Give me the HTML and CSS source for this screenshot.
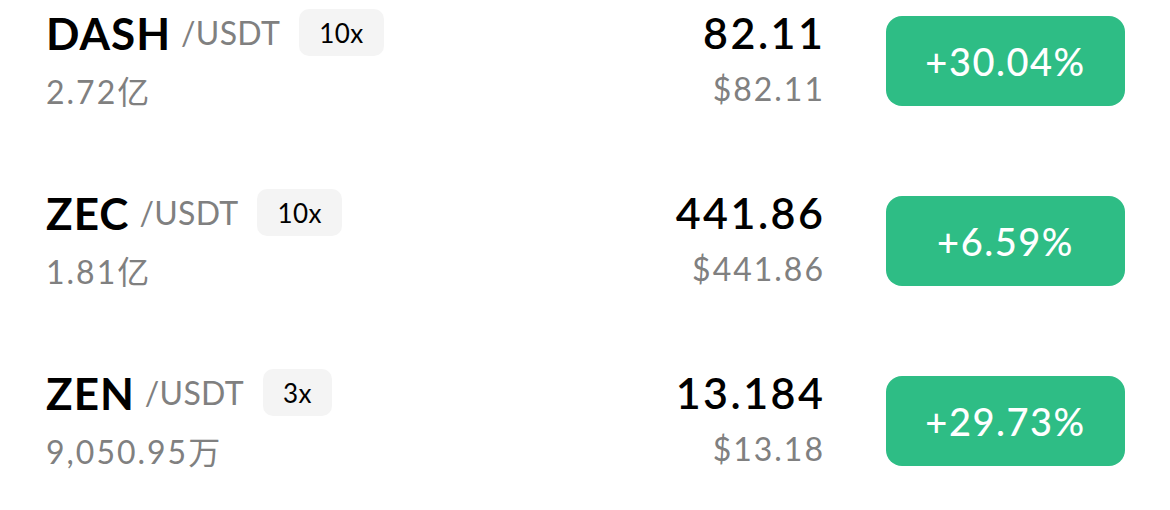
FILE: index.html
```html
<!DOCTYPE html>
<html lang="zh">
<head>
<meta charset="utf-8">
<link rel="stylesheet" href="styles.css">
</head>
<body>
<div class="list">
  <div class="row">
    <div class="info">
      <div class="title"><span class="sym">DASH</span><span class="quote">/USDT</span><span class="lev">10x</span></div>
      <div class="vol">2.72亿</div>
    </div>
    <div class="prices">
      <div class="price">82.11</div>
      <div class="usd">$82.11</div>
    </div>
    <div class="chg">+30.04%</div>
  </div>
  <div class="row">
    <div class="info">
      <div class="title"><span class="sym">ZEC</span><span class="quote">/USDT</span><span class="lev">10x</span></div>
      <div class="vol">1.81亿</div>
    </div>
    <div class="prices">
      <div class="price">441.86</div>
      <div class="usd">$441.86</div>
    </div>
    <div class="chg">+6.59%</div>
  </div>
  <div class="row">
    <div class="info">
      <div class="title"><span class="sym">ZEN</span><span class="quote">/USDT</span><span class="lev">3x</span></div>
      <div class="vol">9,050.95万</div>
    </div>
    <div class="prices">
      <div class="price">13.184</div>
      <div class="usd">$13.18</div>
    </div>
    <div class="chg">+29.73%</div>
  </div>
</div>
</body>
</html>
```
FILE: styles.css
```css
html, body {
  margin: 0;
  padding: 0;
  background: #ffffff;
}
body {
  font-family: Lato, "Noto Sans CJK SC", sans-serif;
  color: #000;
  height: 510px;
  overflow: hidden;
}
.list {
  display: flex;
  flex-direction: column;
}
.row {
  height: 180px;
  flex: none;
  box-sizing: border-box;
  padding: 9px 45px 0 46px;
  display: flex;
  align-items: flex-start;
}
.row:last-child {
  height: 150px;
}
.info {
  flex: 1;
  display: flex;
  flex-direction: column;
}
.title {
  height: 47px;
  display: flex;
  align-items: center;
}
.sym {
  font-size: 44px;
  font-weight: 700;
  letter-spacing: 1px;
}
.quote {
  font-size: 32px;
  color: #808080;
  margin-left: 10px;
  letter-spacing: 0.3px;
}
.lev {
  margin-left: 19px;
  height: 47px;
  padding: 0 20px;
  display: flex;
  align-items: center;
  background: #f4f4f4;
  border-radius: 10px;
  font-size: 26px;
  letter-spacing: 0.5px;
}
.vol {
  margin-top: 18px;
  font-size: 32px;
  line-height: 36px;
  color: #808080;
  letter-spacing: 2px;
}
.prices {
  display: flex;
  flex-direction: column;
  align-items: flex-end;
  margin-right: 63px;
}
.price {
  font-size: 43px;
  font-weight: 600;
  line-height: 48px;
  letter-spacing: 2.5px;
  margin-right: -2.5px;
}
.usd {
  margin-top: 14px;
  font-size: 32px;
  line-height: 36px;
  color: #808080;
  letter-spacing: 2px;
  margin-right: -2px;
}
.chg {
  margin-top: 7px;
  width: 239px;
  height: 90px;
  border-radius: 16px;
  background: #2ebd85;
  color: #ffffff;
  font-size: 38px;
  font-weight: 500;
  letter-spacing: 1.5px;
  display: flex;
  align-items: center;
  justify-content: center;
}
```
